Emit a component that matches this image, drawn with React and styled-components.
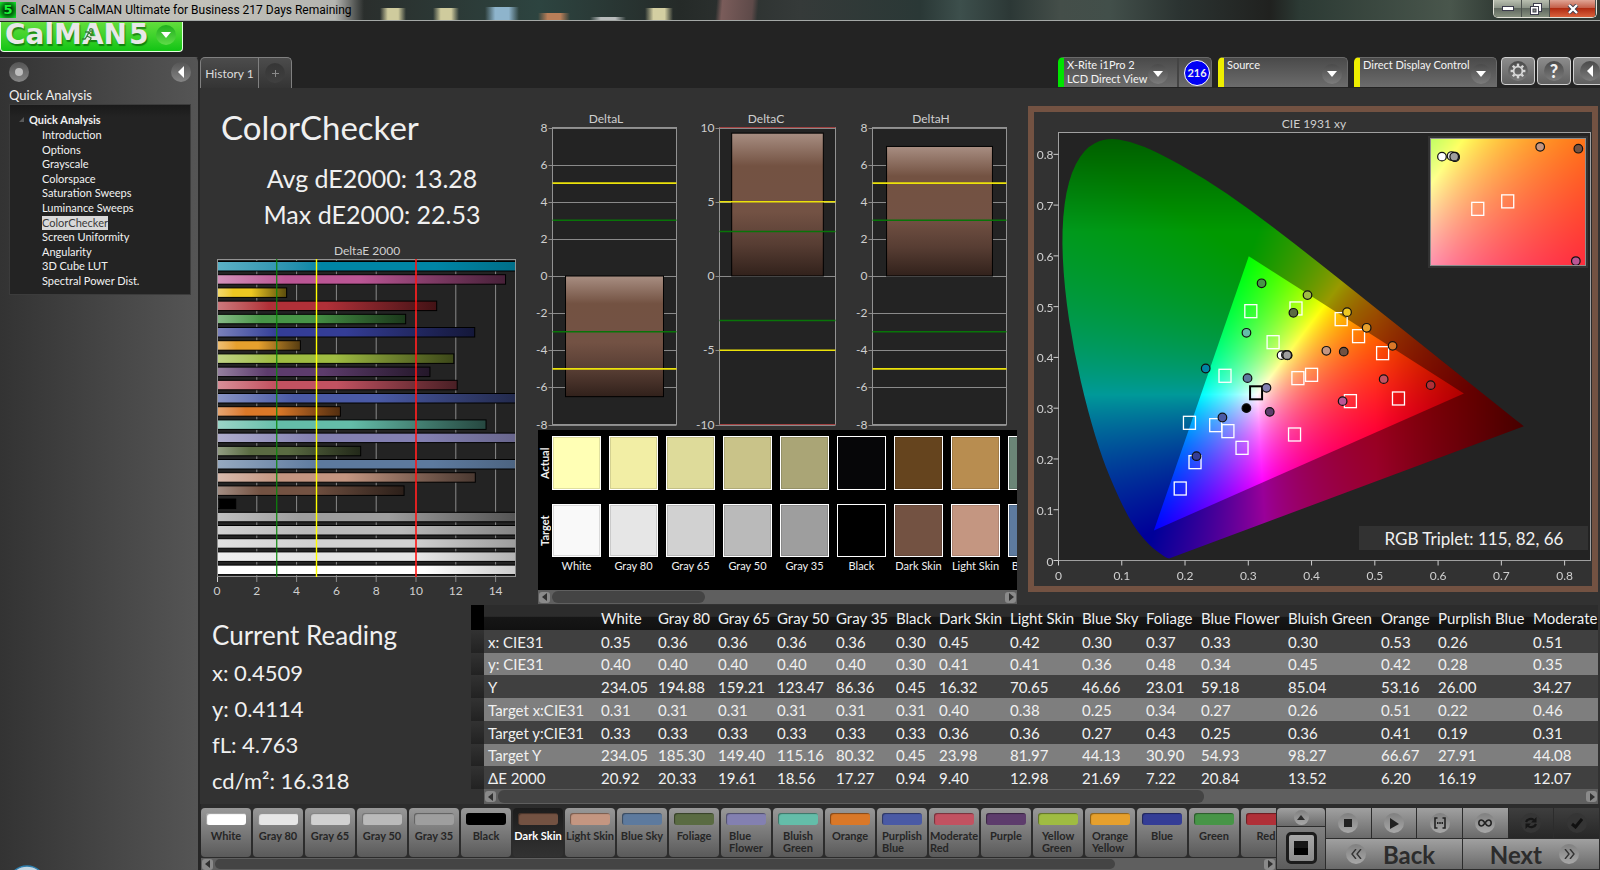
import { useLayoutEffect, useRef } from 'react'
import styled, { createGlobalStyle, css } from 'styled-components'

const GlobalStyle = createGlobalStyle`
  * { box-sizing: border-box; }
  body {
    margin: 0;
    background: #232323;
    color: #f0f0f0;
    font-family: Lato, "Open Sans", sans-serif;
    font-size: 12px;
  }
  button {
    font-family: inherit;
    padding: 0;
    border: none;
    cursor: pointer;
  }
  svg { display: block; }
`

/* ---------- data ---------- */

// actual = colour as measured on the display, xy = measured point, txy = target point
const patches = [
  { name: 'White', color: '#ffffff', actual: '#ffffb5', de: 20.92, xy: [0.3526, 0.4045], txy: [0.3123, 0.3303] },
  { name: 'Gray 80', color: '#e6e6e6', actual: '#f2eea5', de: 20.33, xy: [0.3595, 0.405] },
  { name: 'Gray 65', color: '#d1d1d1', actual: '#dedb9a', de: 19.61, xy: [0.362, 0.4045] },
  { name: 'Gray 50', color: '#bababa', actual: '#c9c389', de: 18.56, xy: [0.362, 0.404] },
  { name: 'Gray 35', color: '#9e9e9e', actual: '#aaa576', de: 17.27, xy: [0.3614, 0.4045] },
  { name: 'Black', color: '#000000', actual: '#060608', de: 0.94, xy: [0.297, 0.3001] },
  { name: 'Dark Skin', color: '#735242', actual: '#65441e', de: 9.4, xy: [0.4509, 0.4114], txy: [0.4, 0.3657] },
  { name: 'Light Skin', color: '#c49681', actual: '#b88d50', de: 12.98, xy: [0.4234, 0.413], txy: [0.3784, 0.3592] },
  { name: 'Blue Sky', color: '#5d7a9e', actual: '#6b8577', de: 21.69, xy: [0.2988, 0.3592], txy: [0.2485, 0.2666] },
  { name: 'Foliage', color: '#5a6b42', de: 7.22, xy: [0.3713, 0.4879], txy: [0.3392, 0.43] },
  { name: 'Blue Flower', color: '#8380b1', de: 20.84, xy: [0.3287, 0.3401], txy: [0.2678, 0.2548] },
  { name: 'Bluish Green', color: '#64bda9', de: 13.52, xy: [0.2971, 0.4485], txy: [0.2632, 0.3638] },
  { name: 'Orange', color: '#da7828', de: 6.2, xy: [0.5281, 0.4228], txy: [0.5123, 0.4084] },
  { name: 'Purplish Blue', color: '#4a5aa5', de: 16.19, xy: [0.2591, 0.2817], txy: [0.2158, 0.1937] },
  { name: 'Moderate Red', color: '#c25261', de: 12.07, xy: [0.514, 0.3572], txy: [0.4614, 0.3139] },
  { name: 'Purple', color: '#5d3c6c', de: 10.7, xy: [0.3339, 0.2928], txy: [0.2901, 0.2219] },
  { name: 'Yellow Green', color: '#9fbc42', de: 11.9, xy: [0.3936, 0.5227], txy: [0.3754, 0.4964] },
  { name: 'Orange Yellow', color: '#e6a02d', de: 4.19, xy: [0.4871, 0.4583], txy: [0.4743, 0.4419] },
  { name: 'Blue', color: '#343d96', de: 12.95, xy: [0.2181, 0.2055], txy: [0.1924, 0.1418] },
  { name: 'Green', color: '#479547', de: 9.48, xy: [0.321, 0.546], txy: [0.304, 0.4911] },
  { name: 'Red', color: '#b03038', de: 11.04, xy: [0.5883, 0.3454], txy: [0.5374, 0.3191] },
  { name: 'Yellow', color: '#eec821', de: 3.5, xy: [0.4561, 0.4892], txy: [0.4468, 0.4754] },
  { name: 'Magenta', color: '#bb5695', de: 14.5, xy: [0.4491, 0.3139], txy: [0.3731, 0.2482] },
  { name: 'Cyan', color: '#0085a5', de: 22, xy: [0.2327, 0.3782], txy: [0.207, 0.2712] },
]

const selected = 'Dark Skin'

const readings = ['x: 0.4509', 'y: 0.4114', 'fL: 4.763', 'cd/m²: 16.318']

const tableColumns = [57, 60, 59, 59, 60, 43, 71, 72, 64, 55, 87, 93, 57, 95, 120]

const tableRows = [
  ['x: CIE31', '0.35 0.36 0.36 0.36 0.36 0.30 0.45 0.42 0.30 0.37 0.33 0.30 0.53 0.26 0.51'],
  ['y: CIE31', '0.40 0.40 0.40 0.40 0.40 0.30 0.41 0.41 0.36 0.48 0.34 0.45 0.42 0.28 0.35'],
  ['Y', '234.05 194.88 159.21 123.47 86.36 0.45 16.32 70.65 46.66 23.01 59.18 85.04 53.16 26.00 34.27'],
  ['Target x:CIE31', '0.31 0.31 0.31 0.31 0.31 0.31 0.40 0.38 0.25 0.34 0.27 0.26 0.51 0.22 0.46'],
  ['Target y:CIE31', '0.33 0.33 0.33 0.33 0.33 0.33 0.36 0.36 0.27 0.43 0.25 0.36 0.41 0.19 0.31'],
  ['Target Y', '234.05 185.30 149.40 115.16 80.32 0.45 23.98 81.97 44.13 30.90 54.93 98.27 66.67 27.91 44.08'],
  ['ΔE 2000', '20.92 20.33 19.61 18.56 17.27 0.94 9.40 12.98 21.69 7.22 20.84 13.52 6.20 16.19 12.07'],
]

const pages = [
  'Introduction', 'Options', 'Grayscale', 'Colorspace', 'Saturation Sweeps', 'Luminance Sweeps',
  'ColorChecker', 'Screen Uniformity', 'Angularity', '3D Cube LUT', 'Spectral Power Dist.',
]

// Spectral locus, CIE 1931 2 degree observer
const locus = [
  [0.1741, 0.005], [0.1714, 0.0051], [0.1644, 0.0109], [0.1566, 0.0177], [0.144, 0.0297],
  [0.1241, 0.0578], [0.1096, 0.0868], [0.0913, 0.1327], [0.0687, 0.2007], [0.0454, 0.295],
  [0.0235, 0.4127], [0.0082, 0.5384], [0.0039, 0.6548], [0.0139, 0.7502], [0.0389, 0.812],
  [0.0743, 0.8338], [0.1142, 0.8262], [0.1547, 0.8059], [0.2296, 0.7543], [0.3016, 0.6923],
  [0.3731, 0.6245], [0.4441, 0.5547], [0.5125, 0.4866], [0.5752, 0.4242], [0.627, 0.3725],
  [0.6658, 0.334], [0.6915, 0.3083], [0.719, 0.2809], [0.7347, 0.2653],
]
const gamut = [[0.64, 0.33], [0.3, 0.6], [0.15, 0.06]]

/* ---------- shell ---------- */

const Shell = styled.div`
  display: flex;
  flex-direction: column;
  height: 100vh;
  overflow: hidden;
`

const blob = color => `linear-gradient(90deg, transparent, ${color} 30%, ${color} 70%, transparent)`

const TitleBar = styled.header`
  flex: none;
  display: flex;
  align-items: center;
  height: 21px;
  border-bottom: 1px solid #a4a8a6;
  color: #000;
  font: 12px Roboto, sans-serif;
  background:
    linear-gradient(90deg, #a9aaa6, #b9b7b4 60px, #c2c2ba 200px, #b4b4b0 335px, transparent 364px),
    ${blob('#cfcb9d')} 380px 8px / 26px 12px no-repeat,
    ${blob('#cfcb9d')} 433px 8px / 26px 12px no-repeat,
    ${blob('#8eb4cc')} 485px 7px / 34px 13px no-repeat,
    ${blob('#b87e58')} 538px 13px / 32px 8px no-repeat,
    ${blob('#b8bcbc')} 590px 17px / 36px 4px no-repeat,
    ${blob('#d4cfa2')} 645px 8px / 28px 12px no-repeat,
    linear-gradient(95deg, transparent 714px, #7a5c5a 720px, #5e4a49 750px, transparent 756px),
    linear-gradient(35deg, transparent 1088px, #79b99e 1094px, #74b096 1104px, #aab376 1112px, #b3bb7a 1136px, transparent 1154px),
    linear-gradient(90deg, #2a2e2c 360px, #2d4440 540px, #252a28 680px, #353a39 800px, #2a3836 920px,
      #3d4f4c 960px, #2c3836 1010px, #444e49 1060px, #424f4a 1110px, #2b3331 1180px, #20211f 1270px, #2c3a34 1300px, #49564c 1450px, #303a34 1500px);
`

const AppIcon = styled.span`
  width: 16px;
  height: 16px;
  margin-right: 5px;
  background: radial-gradient(#003b05 30%, #12ee2a);
  color: #19f534;
  font: bold 13px/16px "DejaVu Sans", sans-serif;
  text-align: center;
`

const WindowButtons = styled.div`
  display: flex;
  align-self: flex-start;
  margin-left: auto;
  margin-right: 3px;
  border: 1px solid #e2e2d8;
  border-top: none;
  border-radius: 0 0 5px 5px;
  overflow: hidden;
`

const WindowButton = styled.button`
  display: flex;
  align-items: center;
  justify-content: center;
  width: ${p => (p.$close ? 46 : 28)}px;
  height: 17px;
  border-right: 1px solid #4c524e;
  background: ${p => (p.$close
    ? 'linear-gradient(#e0a595, #c4604a 45%, #b02c12 50%, #d8623c)'
    : 'linear-gradient(#b9bfb0, #8c9488 45%, #5f685f 50%, #87917f)')};
`

const BrandBar = styled.div`
  flex: none;
  height: 36px;
  padding-top: 1px;
`

const Brand = styled.button`
  display: flex;
  align-items: center;
  gap: 2px;
  width: 183px;
  height: 30px;
  padding: 0 6px 3px 4px;
  border: 1px solid #e4ffe0;
  border-top: none;
  border-radius: 0 0 4px 4px;
  background: linear-gradient(#62dd3c, #3dd22b 50%, #12c414);
  color: #e8e8e8;
  font: bold 28px/26px "DejaVu Sans", sans-serif;
  text-shadow: 1px 2px 1px rgba(0, 70, 0, 0.55);
`

const BrandName = styled.span`
  position: relative;
`

const Runner = styled.svg`
  position: absolute;
  left: 76px;
  top: 6px;
`

const Knob = styled.span`
  flex: none;
  display: flex;
  align-items: center;
  justify-content: center;
  width: 20px;
  height: 20px;
  border-radius: 50%;
  background: ${p => p.$bg || 'linear-gradient(#4a4a4a, #7c7c7c)'};
`

const BrandKnob = styled(Knob)`
  margin-left: auto;
`

const Body = styled.div`
  flex: 1;
  display: flex;
  min-height: 0;
`

/* ---------- sidebar ---------- */

const Sidebar = styled.aside`
  flex: none;
  display: flex;
  flex-direction: column;
  width: 200px;
  padding: 4px 7px 0 9px;
  border-top: 1px solid #5a5a5a;
  border-right: 2px solid #262626;
  border-radius: 0 5px 0 0;
  background: linear-gradient(90deg, #333, #555);
`

const SidebarTop = styled.div`
  display: flex;
  justify-content: space-between;
  height: 20px;
`

const KnobButton = styled.button`
  display: flex;
  align-items: center;
  justify-content: center;
  width: 20px;
  height: 20px;
  border-radius: 50%;
  background: linear-gradient(#555, #858585);
`

const SidebarTitle = styled.h2`
  margin: 4px 0 0;
  font-size: 13px;
  font-weight: 400;
  line-height: 18px;
`

const Tree = styled.nav`
  height: 191px;
  margin-bottom: auto;
  padding: 6px 0 4px 9px;
  border: 1px solid #3c3c3c;
  background: linear-gradient(#1a1a1a, #232323 12px);
  font-size: 11px;
`

const TreeRoot = styled.div`
  display: flex;
  align-items: center;
  gap: 5px;
  height: 16px;
  font-weight: 700;
`

const TreeList = styled.ul`
  display: flex;
  flex-direction: column;
  justify-content: space-between;
  height: 160px;
  margin: 1px 0 0;
  padding: 0 0 0 23px;
  list-style: none;
  line-height: 14px;
`

const TreeLink = styled.a`
  color: #f2f2f2;
  text-decoration: none;
  ${p => p.$current && css`
    display: inline-block;
    background: #d9d9d9;
    color: #3a3a3a;
  `}
`

/* ---------- top tabs and device controls ---------- */

const Main = styled.main`
  flex: 1;
  display: flex;
  flex-direction: column;
  min-width: 0;
  background: #323232;
`

const TopRow = styled.div`
  flex: none;
  display: flex;
  justify-content: space-between;
  height: 31px;
  background: #232323;
`

const Tabs = styled.div`
  display: flex;
  width: 92px;
  border: 1px solid #808080;
  border-bottom: none;
  border-radius: 5px 5px 0 0;
  background: linear-gradient(#4c4c4c, #343434);
`

const Tab = styled.button`
  flex: ${p => (p.$add ? '1' : 'none')};
  display: flex;
  align-items: center;
  justify-content: center;
  width: 58px;
  border-right: ${p => (p.$add ? 'none' : '1px solid #808080')};
  background: none;
  color: #dcdcdc;
  font-size: 12px;
`

const Devices = styled.div`
  display: flex;
  gap: 6px;
  margin-right: -7px;
`

const Device = styled.div`
  display: flex;
  width: ${p => p.$width}px;
  height: 30px;
  border: 1px solid #6a6a6a;
  border-bottom: none;
  border-left: 6px solid ${p => p.$stripe};
  border-radius: 5px 5px 0 0;
  background: linear-gradient(#4a4a4a, #6c6c6c);
`

const DeviceButton = styled.button`
  flex: 1;
  display: flex;
  align-items: flex-start;
  justify-content: space-between;
  padding: 0 9px 0 3px;
  background: none;
  color: #f4f4f4;
  font-size: 11px;
  line-height: 14px;
  text-align: left;
  white-space: nowrap;
  ${Knob} { margin-top: 6px; }
  &:last-child { padding-right: 5px; }
`

const Meter = styled.div`
  display: flex;
  align-items: center;
  justify-content: center;
  width: 34px;
  padding-left: 4px;
  border-left: 2px solid #444;
`

const MeterBadge = styled.span`
  width: 26px;
  height: 26px;
  border: 1px solid #fff;
  border-radius: 50%;
  background: #0000f5;
  font-size: 11px;
  font-weight: 700;
  line-height: 24px;
  text-align: center;
`

const ToolButtons = styled.div`
  display: flex;
  gap: 2px;
  margin-left: -2px;
`

const ToolButton = styled.button`
  display: flex;
  align-items: center;
  justify-content: center;
  width: 34px;
  height: 28px;
  border: 1px solid #d0d0d0;
  border-radius: 4px;
  background: linear-gradient(#8c8c8c, #606060);
  color: #f0f0f0;
  font-size: 18px;
  font-weight: 900;
`

/* ---------- content ---------- */

const Upper = styled.div`
  flex: none;
  display: grid;
  grid-template-columns: 330fr 498fr 570fr;
  height: 517px;
  padding-right: 2px;
`

const Column = styled.section`
  min-width: 0;
`

const PageTitle = styled.h1`
  margin: 19px 0 13px 21px;
  font-size: 33px;
  font-weight: 400;
  line-height: 40px;
`

const Stats = styled.div`
  margin-bottom: 8px;
  padding-left: 14px;
  font-size: 25px;
  line-height: 36px;
  text-align: center;
`

const Chart = styled.svg`
  width: 100%;
  overflow: visible;
  fill: #cfcfcf;
  font-size: 12px;
`

const Deltas = styled.div`
  display: grid;
  grid-template-columns: 160fr 160fr 178fr;
  padding-top: 20px;
`

const Swatches = styled.div`
  margin: 0 11px 0 8px;
`

const SwatchStrip = styled.div`
  display: flex;
  gap: 8px;
  height: 160px;
  padding-top: 6px;
  overflow: hidden;
  background: #000;
`

const SwatchLabels = styled.div`
  flex: none;
  display: flex;
  flex-direction: column;
  gap: 14px;
  width: 14px;
  margin-right: -8px;
  font-size: 11px;
  font-weight: 700;
`

const SwatchLabel = styled.span`
  height: 54px;
  line-height: 14px;
  text-align: center;
  writing-mode: vertical-rl;
  transform: rotate(180deg);
`

const SwatchPair = styled.div`
  flex: none;
  display: flex;
  flex-direction: column;
  align-items: center;
  gap: 14px;
  width: 49px;
  font-size: 11px;
  white-space: nowrap;
`

const Swatch = styled.div`
  width: 49px;
  height: ${p => (p.$target ? 53 : 54)}px;
  border: 1px solid #fff;
  background: ${p => p.$color};
  box-shadow: inset 0 0 0 1px rgba(0, 0, 0, 0.12);
`

const SwatchName = styled.span`
  margin-top: -12px;
  line-height: 14px;
`

const CiePanel = styled.div`
  margin-top: 18px;
  border: 6px solid #735242;
`

const Lower = styled.div`
  flex: none;
  display: flex;
`

const Readout = styled.section`
  flex: none;
  width: 271px;
  padding: 12px 0 0 12px;
  font-size: 22px;
  line-height: 36px;
`

const ReadoutTitle = styled.h2`
  margin: 0 0 2px;
  font-size: 26px;
  font-weight: 400;
`

const DataPane = styled.section`
  flex: 1;
  min-width: 0;
  margin-right: 2px;
  overflow: hidden;
`

const DataTable = styled.table`
  width: 1178px;
  table-layout: fixed;
  border-collapse: collapse;
  font-size: 15px;
  white-space: nowrap;

  th, td {
    height: 23px;
    padding: 0 0 0 4px;
    font-weight: 400;
    line-height: 20px;
    text-align: left;
  }
  tr:nth-child(4n + 2) > * { height: 22px; }
  thead th {
    height: 25px;
    background: linear-gradient(#2c2c2c 45%, #161616 50%, #111);
  }
  thead th:first-child { background: #000; }
  tbody tr { background: #404040; }
  tbody tr:nth-child(even) { background: #7e7e7e; }
  tbody td:first-child { background: linear-gradient(#323232, #222); }
`

const DataScroll = styled.div`
  padding-left: 13px;
`

/* ---------- scrollbar ---------- */

const Track = styled.div`
  display: flex;
  align-items: center;
  gap: 2px;
  height: ${p => p.$height}px;
  padding: 1px;
  background: #5f5f5f;
`

const ScrollButton = styled.button`
  flex: none;
  display: flex;
  align-items: center;
  justify-content: center;
  width: 11px;
  height: 11px;
  border-radius: 3px;
  background: #8a8a8a;
`

const Lane = styled.div`
  flex: 1;
  height: 100%;
`

const Thumb = styled.div`
  width: ${p => p.$size}%;
  height: 100%;
  border-radius: 6px;
  background: #444;
`

function ScrollBar({ size, height = 14 }) {
  return (
    <Track $height={height}>
      <ScrollButton aria-label="Scroll left">
        <svg width="6" height="8"><path d="M5 0v8L0 4z" fill="#303030" /></svg>
      </ScrollButton>
      <Lane><Thumb $size={size} /></Lane>
      <ScrollButton aria-label="Scroll right">
        <svg width="6" height="8"><path d="M1 0v8l5-4z" fill="#303030" /></svg>
      </ScrollButton>
    </Track>
  )
}

/* ---------- bottom bar ---------- */

const BottomBar = styled.footer`
  flex: none;
  display: flex;
  gap: 1px;
  height: 66px;
  padding-top: 4px;
  border-left: 1px solid #262626;
  background: #2c2c2c;
`

const PatchArea = styled.div`
  flex: 1;
  min-width: 0;
  overflow: hidden;
`

const PatchList = styled.div`
  display: flex;
  gap: 2px;
  height: 50px;
`

const PatchButton = styled.button`
  flex: none;
  display: flex;
  flex-direction: column;
  align-items: center;
  gap: 5px;
  width: 50px;
  height: 49px;
  padding-top: 5px;
  border-radius: 4px;
  background: ${p => (p.$active ? 'linear-gradient(#1c1c1c, #323232)' : 'linear-gradient(#989898, #5a5a5a)')};
  color: ${p => (p.$active ? '#fff' : '#262626')};
  font-size: 11px;
  font-weight: 700;
  line-height: 12px;
  text-align: left;
`

const PatchChip = styled.span`
  width: 40px;
  height: 12px;
  border-radius: 3px;
  background: ${p => p.$color};
  box-shadow: inset 1px 1px 1px rgba(0, 0, 0, 0.4);
`

const PatchName = styled.span`
  width: ${p => (p.$wrap ? 'min-content' : 'auto')};
  white-space: ${p => (p.$wrap ? 'normal' : 'nowrap')};
`

const Transport = styled.div`
  flex: none;
  display: grid;
  grid-template-columns: 48px repeat(6, 1fr);
  grid-template-rows: 30px 30px;
  gap: 1px;
  width: 322px;
  margin-right: 1px;
`

const Source = styled.div`
  grid-row: span 2;
  display: flex;
  flex-direction: column;
  gap: 1px;
`

const silver = 'linear-gradient(#a0a0a0, #6a6a6a)'

const ControlButton = styled.button`
  grid-column: span ${p => p.$span || 1};
  display: flex;
  align-items: center;
  justify-content: center;
  background: ${p => (p.$off ? 'linear-gradient(#3e3e3e, #272727)' : silver)};
  color: #2c2c2c;
`

const StepButton = styled(ControlButton)`
  justify-content: ${p => (p.$next ? 'flex-end' : 'flex-start')};
  gap: 17px;
  padding: 0 20px;
  font-size: 24px;
  font-weight: 700;
`

const UpButton = styled(ControlButton)`
  height: 18px;
  border-radius: 4px 4px 0 0;
`

const PatternButton = styled(ControlButton)`
  flex: 1;
  background: linear-gradient(#808080, #5c5c5c);
`

const PatternFrame = styled.span`
  display: flex;
  align-items: center;
  justify-content: center;
  width: 31px;
  height: 32px;
  border: 3px solid #1c1c1c;
  border-radius: 5px;
  background: linear-gradient(#a8a8a8, #8a8a8a);
`

const ControlKnob = styled(Knob)`
  background: ${p => (p.$off ? '#353535' : 'linear-gradient(#808080, #a8a8a8)')};
`

const SmallKnob = styled(ControlKnob)`
  width: 15px;
  height: 15px;
`

/* ---------- drawings ---------- */

function Caret({ color = '#fff' }) {
  return <svg width="10" height="6"><path d="M0 0h10L5 6z" fill={color} /></svg>
}

function CaretLeft() {
  return <svg width="6" height="12"><path d="M6 0v12L0 6z" fill="#fff" /></svg>
}

function Gear() {
  return (
    <svg width="16" height="16" viewBox="-8 -8 16 16" fill="none" stroke="#d8d8d8">
      <circle r="4.4" strokeWidth="1.8" />
      {[0, 45, 90, 135, 180, 225, 270, 315].map(a => (
        <path key={a} d="M0-5v-2.4" strokeWidth="2.4" transform={`rotate(${a})`} />
      ))}
    </svg>
  )
}

// top edge of the start orb peeking over the window
function Orb() {
  return (
    <svg width="36" height="5" aria-hidden="true">
      <circle cx="18" cy="20" r="19" fill="#c4d6e2" stroke="#2f7fae" strokeWidth="1.5" />
    </svg>
  )
}

function DeltaEChart() {
  const left = 17
  const unit = 19.9
  const bars = [...patches].reverse()
  const px = v => left + v * unit
  return (
    <Chart viewBox="0 0 330 360" role="img" aria-label="DeltaE 2000 by patch">
      <defs>
        <clipPath id="de-clip"><rect x={left} y="19" width="298" height="318" /></clipPath>
        {bars.map((b, i) => (
          <linearGradient key={b.name} id={`de-${i}`}>
            <stop offset="0" stopColor={`color-mix(in srgb, ${b.color}, #fff 36%)`} />
            <stop offset="0.24" stopColor={b.color} />
            <stop offset="0.5" stopColor={b.color} />
            <stop offset="1" stopColor={`color-mix(in srgb, ${b.color}, #000 ${b.de > 18 ? 45 : 62}%)`} />
          </linearGradient>
        ))}
      </defs>
      <text x="167" y="15" textAnchor="middle">DeltaE 2000</text>
      <rect x={left} y="19" width="298" height="318" fill="#232323" />
      {[2, 4, 6, 8, 10, 12, 14].map(v => (
        <path key={v} d={`M${px(v)} 19V342`} stroke="#8a8a8a" />
      ))}
      <g clipPath="url(#de-clip)">
        {bars.map((b, i) => (
          <rect key={b.name} x={left - 1} y={21.5 + i * 13.2} width={b.de * unit + 1} height="9.5"
            fill={`url(#de-${i})`} stroke="#000" />
        ))}
      </g>
      <rect x={left + 0.5} y="19.5" width="298" height="317" fill="none" stroke="#929292" />
      <path d={`M${left + 0.5} 337v5`} stroke="#cfcfcf" />
      <path d={`M${px(3)} 19V337`} stroke="#0b870b" strokeOpacity="0.85" strokeWidth="1.4" />
      <path d={`M${px(5)} 19V337`} stroke="#ffff00" strokeWidth="1.4" />
      <path d={`M${px(10)} 19V337`} stroke="#ff1414" strokeWidth="1.6" />
      {[0, 2, 4, 6, 8, 10, 12, 14].map(v => (
        <text key={v} x={px(v)} y="355" textAnchor="middle">{v}</text>
      ))}
    </Chart>
  )
}

function BipolarChart({ title, value, max, step, left, right, width }) {
  const top = 19.5
  const bottom = 316.5
  const mid = (top + bottom) / 2
  const py = v => mid - (v / max) * (mid - top)
  const ticks = []
  for (let v = max; v >= -max; v -= step) ticks.push(v)
  const barWidth = (right - left) * 0.79
  return (
    <Chart viewBox={`0 0 ${width} 322`} role="img" aria-label={title}>
      <defs>
        <linearGradient id={`grad-${title}`} x2="0" y2="1">
          <stop offset="0" stopColor="#a88e82" />
          <stop offset="0.23" stopColor="#735242" />
          <stop offset="0.55" stopColor="#735244" />
          <stop offset="0.78" stopColor="#573d33" />
          <stop offset="1" stopColor="#31211b" />
        </linearGradient>
      </defs>
      <text x={width > 170 ? 81 : 76} y="15" textAnchor="middle">{title}</text>
      <rect x={left} y={top} width={right - left} height={bottom - top} fill="#232323" />
      {ticks.map(v => (
        <g key={v}>
          <path d={`M${left - 4} ${Math.round(py(v)) + 0.5}H${right}`} stroke="#8a8a8a" />
          <text x={left - 5} y={py(v) + 4} textAnchor="end">{v}</text>
        </g>
      ))}
      <rect x={left} y={top} width={right - left} height={bottom - top} fill="none" stroke="#929292" />
      <rect x={left + (right - left - barWidth) / 2} y={Math.min(py(value), mid)}
        width={barWidth} height={Math.abs(py(value) - mid)}
        fill={`url(#grad-${title})`} stroke="#000" />
      {[5, -5].map(v => <path key={v} d={`M${left} ${py(v)}H${right}`} stroke="#ece20a" strokeWidth="1.7" />)}
      {[3, -3].map(v => <path key={v} d={`M${left} ${py(v)}H${right}`} stroke="#087408" strokeWidth="1.5" />)}
      {max === 10 && [10, -10].map(v => (
        <path key={v} d={`M${left} ${py(v)}H${right}`} stroke="#a04040" />
      ))}
    </Chart>
  )
}

// Linear sRGB for a chromaticity, scaled so the strongest channel is full
function chromaticity(x, y) {
  const X = x / y
  const Z = (1 - x - y) / y
  const rgb = [
    3.2406 * X - 1.5372 - 0.4986 * Z,
    -0.9689 * X + 1.8758 + 0.0415 * Z,
    0.0557 * X - 0.204 + 1.057 * Z,
  ].map(v => Math.max(0, v))
  const top = Math.max(...rgb) || 1
  // falls off toward the deep red and deep green ends
  const fade = Math.min(1, 1 - (x - 0.5) * 2.3, 1 - (y - 0.65) * 2.1)
  return rgb.map(v => (v / top) * fade * 255)
}

function paint(ctx, w, h, range, level) {
  const layer = document.createElement('canvas')
  layer.width = w
  layer.height = h
  const lctx = layer.getContext('2d')
  const img = lctx.createImageData(w, h)
  for (let j = 0; j < h; j++) {
    for (let i = 0; i < w; i++) {
      const x = range.x0 + (i / w) * (range.x1 - range.x0)
      const y = Math.max(0.001, range.y1 - (j / h) * (range.y1 - range.y0))
      const [r, g, b] = chromaticity(x, y)
      const o = (j * w + i) * 4
      img.data[o] = r * level
      img.data[o + 1] = g * level
      img.data[o + 2] = b * level
      img.data[o + 3] = 255
    }
  }
  lctx.putImageData(img, 0, 0)
  ctx.drawImage(layer, 0, 0)
}

function ColorField({ width, height, range, shaped }) {
  const ref = useRef(null)

  useLayoutEffect(() => {
    const ctx = ref.current.getContext('2d')
    ctx.clearRect(0, 0, width, height)
    if (!shaped) {
      paint(ctx, width, height, range, 1)
      return
    }
    const at = ([x, y]) => [
      ((x - range.x0) / (range.x1 - range.x0)) * width,
      ((range.y1 - y) / (range.y1 - range.y0)) * height,
    ]
    ctx.save()
    ctx.beginPath()
    const pts = locus.map(at)
    ctx.moveTo(...pts[0])
    for (let i = 1; i < pts.length - 1; i++) {
      const [cx, cy] = pts[i]
      const [nx, ny] = pts[i + 1]
      ctx.quadraticCurveTo(cx, cy, (cx + nx) / 2, (cy + ny) / 2)
    }
    ctx.lineTo(...pts[pts.length - 1])
    ctx.closePath()
    ctx.clip()
    paint(ctx, width, height, range, 0.6)
    ctx.restore()
    ctx.save()
    ctx.beginPath()
    gamut.map(at).forEach(p => ctx.lineTo(...p))
    ctx.closePath()
    ctx.clip()
    paint(ctx, width, height, range, 1)
    ctx.restore()
  }, [width, height, range, shaped])

  return <canvas ref={ref} width={width} height={height} />
}

const fullRange = { x0: 0, x1: 0.8425, y0: 0, y1: 0.843 }
const insetRange = { x0: 0.3447, x1: 0.4557, y0: 0.3105, y1: 0.4198 }

function Markers({ px, py, list }) {
  return (
    <>
      {list.filter(p => p.txy).map(p => (
        <rect key={p.name} x={px(p.txy[0]) - 6} y={py(p.txy[1]) - 6.5} width="12" height="13" fill="none"
          stroke={p.name === 'White' ? '#000' : '#fff'} strokeWidth={p.name === 'White' ? 2 : 1.3} />
      ))}
      {list.map(p => (
        <circle key={p.name} cx={px(p.xy[0])} cy={py(p.xy[1])} r="4.3" fill={p.color} stroke="#111" strokeWidth="1.2" />
      ))}
    </>
  )
}

function CieChart() {
  const left = 24.5
  const top = 20.5
  const w = 533
  const h = 428
  const px = x => left + (x / fullRange.x1) * w
  const py = y => top + h - (y / fullRange.y1) * h
  const ix = x => 397 + ((x - insetRange.x0) / (insetRange.x1 - insetRange.x0)) * 154
  const iy = y => 27 + ((insetRange.y1 - y) / (insetRange.y1 - insetRange.y0)) * 126
  const ticks = [0, 0.1, 0.2, 0.3, 0.4, 0.5, 0.6, 0.7, 0.8]
  const near = patches.filter(p => ['White', 'Gray 80', 'Gray 65', 'Gray 50', 'Gray 35', 'Dark Skin', 'Light Skin', 'Magenta'].includes(p.name))
  return (
    <Chart viewBox="0 0 558 474" role="img" aria-label="CIE 1931 xy chromaticity">
      <defs>
        <clipPath id="inset-clip"><rect x="397" y="27" width="154" height="126" /></clipPath>
      </defs>
      <text x="280" y="16" textAnchor="middle">CIE 1931 xy</text>
      <rect x={left} y={top} width={w} height={h} fill="#232323" />
      <foreignObject x={left} y={top} width={w} height={h}>
        <ColorField width={w} height={h} range={fullRange} shaped />
      </foreignObject>
      <rect x={left} y={top} width={w - 1} height={h} fill="none" stroke="#a0a0a0" />
      {ticks.map(t => (
        <g key={t}>
          <path d={`M${px(t)} ${top + h}v5M${left} ${py(t)}h-5`} stroke="#cfcfcf" />
          <text x={px(t)} y="468" textAnchor="middle">{t}</text>
          <text x={left - 5} y={py(t) + 5} textAnchor="end">{t}</text>
        </g>
      ))}
      <Markers px={px} py={py} list={patches} />
      <rect x="394" y="24" width="160" height="132" fill="#323232" />
      <foreignObject x="397" y="27" width="154" height="126">
        <ColorField width={154} height={126} range={insetRange} />
      </foreignObject>
      <g clipPath="url(#inset-clip)">
        <Markers px={ix} py={iy} list={near} />
      </g>
      <rect x="396.5" y="26.5" width="155" height="127" fill="none" stroke="#8e8e8e" />
      <rect x="325" y="414" width="229" height="24" fill="#323232" />
      <text x="440" y="433" textAnchor="middle" fontSize="17" fill="#f0f0f0">RGB Triplet: 115, 82, 66</text>
    </Chart>
  )
}

/* ---------- app ---------- */

function App() {
  return (
    <>
      <GlobalStyle />
      <Shell>
        <TitleBar>
          <AppIcon>5</AppIcon>
          CalMAN 5 CalMAN Ultimate for Business 217 Days Remaining
          <WindowButtons>
            <WindowButton aria-label="Minimize">
              <svg width="12" height="5"><rect x="0.5" y="0.5" width="11" height="4" fill="#fff" stroke="#3c3c4c" /></svg>
            </WindowButton>
            <WindowButton aria-label="Restore">
              <svg width="12" height="12" fill="none" stroke="#3c3c4c">
                <rect x="3.5" y="0.5" width="8" height="8" fill="#fff" />
                <rect x="0.5" y="3.5" width="8" height="8" fill="#fff" />
                <rect x="3" y="6" width="3" height="3" fill="#8c9488" />
              </svg>
            </WindowButton>
            <WindowButton $close aria-label="Close">
              <svg width="12" height="10">
                <path d="M2 1l8 8M10 1L2 9" stroke="#3c3c4c" strokeWidth="4" />
                <path d="M2 1l8 8M10 1L2 9" stroke="#fff" strokeWidth="2.4" />
              </svg>
            </WindowButton>
          </WindowButtons>
        </TitleBar>

        <BrandBar>
          <Brand>
            <BrandName>
              CalMAN
              <Runner width="16" height="14" viewBox="0 0 16 14" fill="none" stroke="#37803a" strokeWidth="1.3">
                <circle cx="10" cy="2" r="1.3" />
                <path d="M4 4l4 0 2 3 3 0M8 4L6 8l4 2-1 3M6 8l-2 3-3 0" />
              </Runner>
            </BrandName>
            <span>5</span>
            <BrandKnob $bg="linear-gradient(#1fae1c, #5fdc48)"><Caret /></BrandKnob>
          </Brand>
        </BrandBar>

        <Body>
          <Sidebar>
            <SidebarTop>
              <KnobButton aria-label="Pin">
                <svg width="8" height="8"><circle cx="4" cy="4" r="4" fill="#bdbdbd" /></svg>
              </KnobButton>
              <KnobButton aria-label="Collapse"><CaretLeft /></KnobButton>
            </SidebarTop>
            <SidebarTitle>Quick Analysis</SidebarTitle>
            <Tree>
              <TreeRoot>
                <svg width="5" height="5"><path d="M5 0v5H0z" fill="#5a5a5a" /></svg>
                Quick Analysis
              </TreeRoot>
              <TreeList>
                {pages.map(page => (
                  <li key={page}>
                    <TreeLink href="#" $current={page === 'ColorChecker'}>{page}</TreeLink>
                  </li>
                ))}
              </TreeList>
            </Tree>
            <Orb />
          </Sidebar>

          <Main>
            <TopRow>
              <Tabs>
                <Tab>History 1</Tab>
                <Tab $add aria-label="Add tab">
                  <Knob $bg="linear-gradient(#363636, #404040)">
                    <svg width="7" height="7"><path d="M3.5 0v7M0 3.5h7" stroke="#8a8a8a" /></svg>
                  </Knob>
                </Tab>
              </Tabs>
              <Devices>
                <Device $width={154} $stripe="#00e400">
                  <DeviceButton>
                    <span>X-Rite i1Pro 2<br />LCD Direct View</span>
                    <Knob><Caret /></Knob>
                  </DeviceButton>
                  <Meter><MeterBadge>216</MeterBadge></Meter>
                </Device>
                <Device $width={130} $stripe="#eeee00">
                  <DeviceButton>Source<Knob><Caret /></Knob></DeviceButton>
                </Device>
                <Device $width={143} $stripe="#eeee00">
                  <DeviceButton>Direct Display Control<Knob><Caret /></Knob></DeviceButton>
                </Device>
                <ToolButtons>
                  <ToolButton aria-label="Settings"><Knob><Gear /></Knob></ToolButton>
                  <ToolButton aria-label="Help"><Knob>?</Knob></ToolButton>
                  <ToolButton aria-label="Collapse panel"><Knob><CaretLeft /></Knob></ToolButton>
                </ToolButtons>
              </Devices>
            </TopRow>

            <Upper>
              <Column>
                <PageTitle>ColorChecker</PageTitle>
                <Stats>
                  <div>Avg dE2000: 13.28</div>
                  <div>Max dE2000: 22.53</div>
                </Stats>
                <DeltaEChart />
              </Column>

              <Column>
                <Deltas>
                  <BipolarChart title="DeltaL" value={-6.5} max={8} step={2} left={22.5} right={146.5} width={160} />
                  <BipolarChart title="DeltaC" value={9.62} max={10} step={5} left={29.5} right={145.5} width={160} />
                  <BipolarChart title="DeltaH" value={6.98} max={8} step={2} left={22.5} right={156.5} width={178} />
                </Deltas>
                <Swatches>
                  <SwatchStrip>
                    <SwatchLabels>
                      <SwatchLabel>Actual</SwatchLabel>
                      <SwatchLabel>Target</SwatchLabel>
                    </SwatchLabels>
                    {patches.slice(0, 9).map(p => (
                      <SwatchPair key={p.name}>
                        <Swatch $color={p.actual} />
                        <Swatch $color={p.name === 'White' ? '#f9f9f9' : p.color} $target />
                        <SwatchName>{p.name}</SwatchName>
                      </SwatchPair>
                    ))}
                  </SwatchStrip>
                  <ScrollBar size={34} />
                </Swatches>
              </Column>

              <Column>
                <CiePanel>
                  <CieChart />
                </CiePanel>
              </Column>
            </Upper>

            <Lower>
              <Readout>
                <ReadoutTitle>Current Reading</ReadoutTitle>
                {readings.map(r => <div key={r}>{r}</div>)}
              </Readout>
              <DataPane>
                <DataTable>
                  <colgroup>
                    <col width="13" />
                    <col width="113" />
                    {tableColumns.map((w, i) => <col key={i} width={w} />)}
                  </colgroup>
                  <thead>
                    <tr>
                      <th />
                      <th />
                      {patches.slice(0, 15).map(p => <th key={p.name} scope="col">{p.name}</th>)}
                    </tr>
                  </thead>
                  <tbody>
                    {tableRows.map(([label, values]) => (
                      <tr key={label}>
                        <td />
                        <th scope="row">{label}</th>
                        {values.split(' ').map((v, i) => <td key={i}>{v}</td>)}
                      </tr>
                    ))}
                  </tbody>
                </DataTable>
                <DataScroll><ScrollBar size={65} height={15} /></DataScroll>
              </DataPane>
            </Lower>

            <BottomBar>
              <PatchArea>
                <PatchList>
                  {patches.map(p => (
                    <PatchButton key={p.name} $active={p.name === selected}>
                      <PatchChip $color={p.color} />
                      <PatchName $wrap={p.name.length > 10}>{p.name}</PatchName>
                    </PatchButton>
                  ))}
                </PatchList>
                <ScrollBar size={86} height={12} />
              </PatchArea>
              <Transport>
                <Source>
                  <UpButton aria-label="Show patterns">
                    <SmallKnob><svg width="8" height="5"><path d="M0 5h8L4 0z" fill="#2c2c2c" /></svg></SmallKnob>
                  </UpButton>
                  <PatternButton aria-label="Pattern window">
                    <PatternFrame>
                      <svg width="14" height="14">
                        <rect width="14" height="14" fill="#000" />
                        <rect width="14" height="7" fill="#161616" />
                      </svg>
                    </PatternFrame>
                  </PatternButton>
                </Source>
                <ControlButton aria-label="Stop">
                  <ControlKnob><svg width="8" height="8"><rect width="8" height="8" fill="#222" /></svg></ControlKnob>
                </ControlButton>
                <ControlButton aria-label="Play">
                  <ControlKnob><svg width="10" height="11"><path d="M1 0v11l9-5z" fill="#222" /></svg></ControlKnob>
                </ControlButton>
                <ControlButton aria-label="Read series">
                  <ControlKnob>
                    <svg width="12" height="12" fill="none" stroke="#222" strokeWidth="1.6">
                      <path d="M3.5 1H1v10h2.5M8.5 1H11v10H8.5" />
                      <path d="M3 6h6" strokeDasharray="1.5 0.75" strokeWidth="1.8" />
                    </svg>
                  </ControlKnob>
                </ControlButton>
                <ControlButton aria-label="Read continuous">
                  <ControlKnob>
                    <svg width="14" height="8" fill="none" stroke="#222" strokeWidth="1.6">
                      <path d="M7 4C5 1 4 1 3.5 1a2.7 3 0 0 0 0 6C4 7 5 7 7 4s3-3 3.5-3a2.7 3 0 0 1 0 6C10 7 9 7 7 4z" />
                    </svg>
                  </ControlKnob>
                </ControlButton>
                <ControlButton $off aria-label="Repeat">
                  <ControlKnob $off>
                    <svg width="14" height="14" fill="none" stroke="#161616" strokeWidth="2.2">
                      <path d="M2 6a5 4.5 0 0 1 8-2M12 8a5 4.5 0 0 1-8 2" />
                      <path d="M12.5 1v5.5H7zM1.5 13V7.5H7z" fill="#161616" stroke="none" />
                    </svg>
                  </ControlKnob>
                </ControlButton>
                <ControlButton $off aria-label="Accept">
                  <ControlKnob $off>
                    <svg width="12" height="11" fill="none" stroke="#111" strokeWidth="3"><path d="M1 6l3.5 3L11 1" /></svg>
                  </ControlKnob>
                </ControlButton>
                <StepButton $span={3}>
                  <ControlKnob>
                    <svg width="11" height="10" fill="none" stroke="#333" strokeWidth="1.4"><path d="M5 0L1 5l4 5M10 0L6 5l4 5" /></svg>
                  </ControlKnob>
                  Back
                </StepButton>
                <StepButton $span={3} $next>
                  Next
                  <ControlKnob>
                    <svg width="11" height="10" fill="none" stroke="#333" strokeWidth="1.4"><path d="M1 0l4 5-4 5M6 0l4 5-4 5" /></svg>
                  </ControlKnob>
                </StepButton>
              </Transport>
            </BottomBar>
          </Main>
        </Body>
      </Shell>
    </>
  )
}

export default App
